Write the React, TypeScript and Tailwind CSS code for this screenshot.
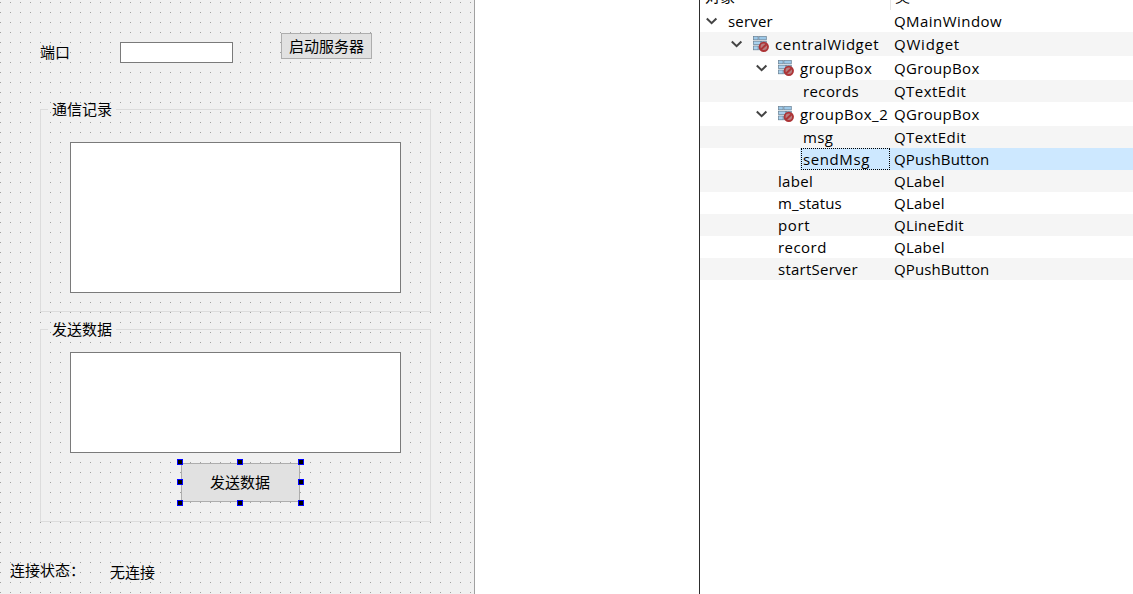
import type { ReactNode } from "react";

type Row = {
  name: string;
  cls: string;
  indent: string;
  height: string;
  nameTracking: string;
  clsTracking: string;
  open?: boolean;
  icon?: boolean;
  selected?: boolean;
};

const rows: Row[] = [
  { name: "server", cls: "QMainWindow", indent: "pl-[6px]", height: "h-[22px]", nameTracking: "tracking-[0.2px]", clsTracking: "tracking-[0.45px]", open: true },
  { name: "centralWidget", cls: "QWidget", indent: "pl-[31px]", height: "h-6", nameTracking: "tracking-[0.54px]", clsTracking: "tracking-[0.8px]", open: true, icon: true },
  { name: "groupBox", cls: "QGroupBox", indent: "pl-[56px]", height: "h-6", nameTracking: "tracking-[0.5px]", clsTracking: "tracking-[0.33px]", open: true, icon: true },
  { name: "records", cls: "QTextEdit", indent: "pl-[103px]", height: "h-[22px]", nameTracking: "tracking-[0.4px]", clsTracking: "tracking-[0.45px]" },
  { name: "groupBox_2", cls: "QGroupBox", indent: "pl-[56px]", height: "h-6", nameTracking: "tracking-[0.48px]", clsTracking: "tracking-[0.33px]", open: true, icon: true },
  { name: "msg", cls: "QTextEdit", indent: "pl-[103px]", height: "h-[22px]", nameTracking: "tracking-[0.4px]", clsTracking: "tracking-[0.45px]" },
  { name: "sendMsg", cls: "QPushButton", indent: "pl-[100px]", height: "h-[22px]", nameTracking: "tracking-[0.6px]", clsTracking: "tracking-[0.12px]", selected: true },
  { name: "label", cls: "QLabel", indent: "pl-[78px]", height: "h-[22px]", nameTracking: "tracking-[0.3px]", clsTracking: "tracking-[0.25px]" },
  { name: "m_status", cls: "QLabel", indent: "pl-[78px]", height: "h-[22px]", nameTracking: "tracking-[0.1px]", clsTracking: "tracking-[0.25px]" },
  { name: "port", cls: "QLineEdit", indent: "pl-[78px]", height: "h-[22px]", nameTracking: "tracking-[0.6px]", clsTracking: "tracking-[0.25px]" },
  { name: "record", cls: "QLabel", indent: "pl-[78px]", height: "h-[22px]", nameTracking: "tracking-[0.45px]", clsTracking: "tracking-[0.25px]" },
  { name: "startServer", cls: "QPushButton", indent: "pl-[78px]", height: "h-[22px]", nameTracking: "tracking-[0.25px]", clsTracking: "tracking-[0.12px]" },
];

function Chevron() {
  return (
    <svg className="h-3 w-3 shrink-0" viewBox="0 0 12 12" fill="none">
      <path d="M0.8 3.5 5.6 8.2 10.4 3.5" stroke="#444" strokeWidth="2" />
    </svg>
  );
}

function LayoutIcon() {
  return (
    <svg className="h-4 w-4 shrink-0" viewBox="0 0 16 16">
      <g stroke="#667e92" strokeWidth="0.7">
        <rect x="0.5" y="0.6" width="4.6" height="3.2" fill="#9cc8e8" />
        <rect x="5.9" y="0.6" width="7.4" height="3.2" fill="#9cc8e8" />
        <rect x="0.5" y="5.2" width="7.2" height="3.4" fill="#a9d1ed" />
        <rect x="8.5" y="5.2" width="4.8" height="3.4" fill="#8eb9dc" />
        <rect x="0.5" y="10" width="4.6" height="3.8" fill="#a9d1ed" />
        <rect x="5.9" y="10" width="7.4" height="3.8" fill="#8eb9dc" />
      </g>
      <circle cx="10.8" cy="10.8" r="4.2" fill="#b87f80" stroke="#ad3537" strokeWidth="1.9" />
      <path d="m8 13.4 5.6-5.2" stroke="#ad3537" strokeWidth="2" />
    </svg>
  );
}

function TreeRow({ row }: { row: Row }) {
  return (
    <div className={`flex even:bg-[#f5f5f5] ${row.height}`}>
      <div className={`flex w-[190px] shrink-0 items-center ${row.indent} ${row.nameTracking} ${row.selected ? "bg-white" : ""}`}>
        {row.open && <Chevron />}
        {row.icon && (
          <span className="ml-[10px]">
            <LayoutIcon />
          </span>
        )}
        {row.selected ? (
          <span className="flex h-full flex-1 bg-[#cde8ff] pl-px">
            <span className="flex flex-1 items-center border border-dotted border-black pl-px">{row.name}</span>
          </span>
        ) : (
          <span className={row.icon ? "ml-[6px]" : row.open ? "ml-[10px]" : ""}>{row.name}</span>
        )}
      </div>
      <div className={`flex flex-1 items-center pl-1 ${row.clsTracking} ${row.selected ? "bg-[#cde8ff]" : ""}`}>{row.cls}</div>
    </div>
  );
}

function GroupBox({ title, className, children }: { title: string; className: string; children: ReactNode }) {
  return (
    <section className={`ml-10 flex w-[391px] flex-col border-x border-b border-[#dcdcdc] ${className}`}>
      <div className="flex h-px items-center">
        <span className="h-px w-[7px] bg-[#dcdcdc]" />
        <h2 className="w-[68px] pb-[2px] pl-1 leading-5">{title}</h2>
        <span className="h-px flex-1 bg-[#dcdcdc]" />
      </div>
      {children}
    </section>
  );
}

const handles = [
  "-left-[5px] -top-[5px]",
  "left-[55px] -top-[5px]",
  "left-[116px] -top-[5px]",
  "-left-[5px] top-[15px]",
  "left-[116px] top-[15px]",
  "-left-[5px] top-[36px]",
  "left-[55px] top-[36px]",
  "left-[116px] top-[36px]",
];

export default function App() {
  return (
    <div className="flex h-[594px] w-[1133px] overflow-hidden bg-white text-black">
      <main className="flex w-[475px] flex-col border-r border-[#a0a0a0] bg-[#f0f0f0] bg-[image:linear-gradient(to_right,transparent_1px,#f0f0f0_1px),linear-gradient(to_bottom,#a0a0a0_1px,#f0f0f0_1px)] bg-[size:10px_10px] bg-[position:0_2px] font-['Noto_Sans_CJK_SC',sans-serif] text-[15px]">
        <div className="flex h-[109px] items-start pl-10">
          <label className="mt-[41px] w-20 leading-[22px]">端口</label>
          <input className="mt-[42px] h-[21px] w-[113px] border border-[#7a7a7a] bg-white outline-none" />
          <button className="ml-12 mt-[33px] h-[26px] w-[91px] border border-[#adadad] bg-[#e1e1e1] leading-6">启动服务器</button>
        </div>
        <GroupBox title="通信记录" className="h-[203px]">
          <div className="ml-[29px] mt-8 h-[151px] w-[331px] border border-[#7a7a7a] bg-white" />
        </GroupBox>
        <GroupBox title="发送数据" className="mt-[17px] h-[193px]">
          <div className="ml-[29px] mt-[22px] h-[101px] w-[331px] border border-[#7a7a7a] bg-white" />
          <button className="relative ml-[140px] mt-[10px] h-[39px] w-[119px] border border-[#adadad] bg-[#e1e1e1] pr-px">
            发送数据
            {handles.map((place) => (
              <span key={place} className={`absolute h-[6px] w-[6px] border border-[#0000ff] bg-black ${place}`} />
            ))}
          </button>
        </GroupBox>
        <div className="mt-[37px] flex items-start pl-[10px] leading-[22px]">
          <span className="w-[100px]">连接状态：</span>
          <span className="mt-[2px]">无连接</span>
        </div>
      </main>
      <div className="w-[224px]" />
      <aside className="flex flex-1 flex-col border-l border-[#2d2d2d] font-['Open_Sans','Noto_Sans_CJK_SC',sans-serif] text-[15px] leading-5">
        <div className="flex h-[10px] items-end overflow-hidden">
          <div className="h-[10px] w-[191px] border-r border-[#e5e5e5] pl-[5px]">
            <div className="-mt-[14px]">对象</div>
          </div>
          <div className="h-[10px] pl-1">
            <div className="-mt-[14px]">类</div>
          </div>
        </div>
        <div>
          {rows.map((row) => (
            <TreeRow key={row.name} row={row} />
          ))}
        </div>
      </aside>
    </div>
  );
}
